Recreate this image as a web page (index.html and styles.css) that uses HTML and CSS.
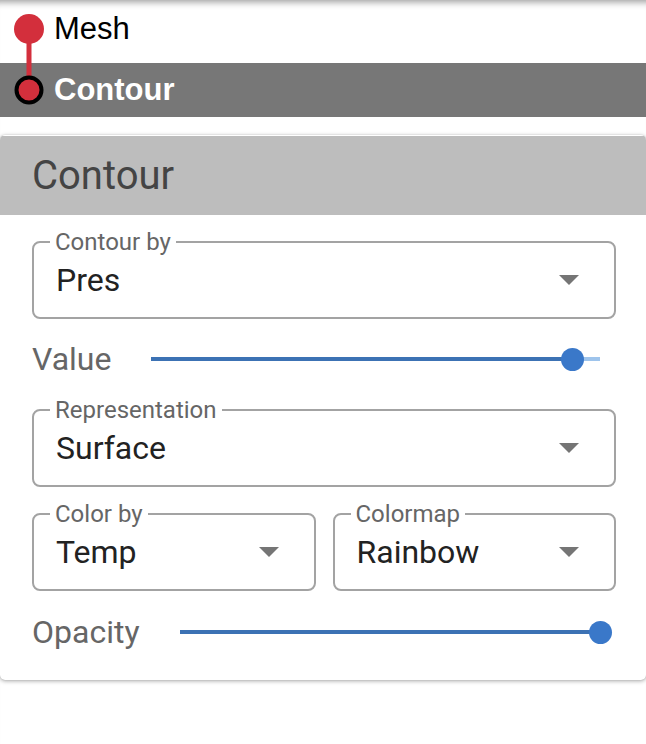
FILE: index.html
```html
<!DOCTYPE html>
<html>
<head>
<meta charset="utf-8">
<link rel="stylesheet" href="styles.css">
</head>
<body>
<div class="app">
  <div class="tree">
    <svg class="graph" width="58" height="120" viewBox="0 0 58 120">
      <line x1="29" y1="40" x2="29" y2="80" stroke="#d32f3c" stroke-width="5"/>
      <circle cx="29" cy="29" r="15" fill="#d32f3c"/>
      <circle cx="29" cy="90" r="12.5" fill="#d32f3c" stroke="#000" stroke-width="4"/>
    </svg>
    <div class="node">Mesh</div>
    <div class="node selected">Contour</div>
  </div>

  <div class="panel">
    <div class="panel-header">Contour</div>
    <div class="panel-body">
      <fieldset class="field">
        <legend>Contour by</legend>
        <div class="select-row">
          <span class="select-value">Pres</span>
          <svg class="arrow" width="20" height="10" viewBox="0 0 20 10"><path d="M0 0 L20 0 L10 10 Z" fill="#757575"/></svg>
        </div>
      </fieldset>

      <div class="slider-row slider-value">
        <span class="slider-label">Value</span>
        <div class="track">
          <div class="track-rest"></div>
          <div class="track-fill" style="width:93.8%"></div>
          <div class="thumb" style="left:93.8%"></div>
        </div>
      </div>

      <fieldset class="field field-2">
        <legend>Representation</legend>
        <div class="select-row">
          <span class="select-value">Surface</span>
          <svg class="arrow" width="20" height="10" viewBox="0 0 20 10"><path d="M0 0 L20 0 L10 10 Z" fill="#757575"/></svg>
        </div>
      </fieldset>

      <div class="pair">
        <fieldset class="field">
          <legend>Color by</legend>
          <div class="select-row">
            <span class="select-value">Temp</span>
            <svg class="arrow" width="20" height="10" viewBox="0 0 20 10"><path d="M0 0 L20 0 L10 10 Z" fill="#757575"/></svg>
          </div>
        </fieldset>
        <fieldset class="field">
          <legend>Colormap</legend>
          <div class="select-row">
            <span class="select-value">Rainbow</span>
            <svg class="arrow" width="20" height="10" viewBox="0 0 20 10"><path d="M0 0 L20 0 L10 10 Z" fill="#757575"/></svg>
          </div>
        </fieldset>
      </div>

      <div class="slider-row slider-opacity">
        <span class="slider-label">Opacity</span>
        <div class="track">
          <div class="track-fill" style="width:100%"></div>
          <div class="thumb" style="left:100%"></div>
        </div>
      </div>
    </div>
  </div>
</div>
</body>
</html>
```

FILE: styles.css
```css
html, body {
  margin: 0;
  padding: 0;
  background: #fff;
}

.app {
  width: 646px;
  min-height: 744px;
  box-shadow: inset 0 9px 7px -7px rgba(0, 0, 0, 0.4);
  font-family: Roboto, "Liberation Sans", sans-serif;
}

.tree {
  position: relative;
  padding-top: 2px;
  display: flex;
  flex-direction: column;
  gap: 7px;
}

.graph {
  position: absolute;
  left: 0;
  top: 0;
}

.node {
  height: 54px;
  display: flex;
  align-items: center;
  padding-left: 54px;
  font-family: "Liberation Sans", Arial, sans-serif;
  font-size: 31px;
  color: #000;
}

.node.selected {
  background: #777777;
  color: #fff;
  font-weight: bold;
}

.panel {
  margin-top: 18px;
  border-radius: 5px;
  box-shadow: 0 1px 4px rgba(0, 0, 0, 0.35), 0 0 1px rgba(0, 0, 0, 0.2);
  overflow: hidden;
  background: #fff;
}

.panel-header {
  height: 79px;
  margin-top: 1px;
  background: #bdbdbd;
  display: flex;
  align-items: center;
  padding-left: 32px;
  font-size: 40px;
  color: #444;
}

.panel-body {
  padding: 15px 30px 24px 32px;
  display: flex;
  flex-direction: column;
}

.field {
  margin: 0;
  min-width: 0;
  border: 2px solid #a3a3a3;
  border-radius: 8px;
  padding: 0 22px 11px 22px;
}

.field legend {
  margin-left: -6px;
  padding: 0 5px;
  font-size: 24px;
  line-height: 24px;
  color: #666;
}

.select-row {
  height: 52px;
  display: flex;
  align-items: center;
  justify-content: space-between;
}

.select-value {
  font-size: 32px;
  color: #222;
}

.arrow {
  margin-right: 13px;
  flex: none;
}

.slider-row {
  height: 48px;
  display: flex;
  align-items: center;
}

.slider-value {
  margin-top: 16px;
  margin-bottom: 15px;
}

.slider-opacity {
  margin-top: 17px;
}

.slider-label {
  font-size: 32px;
  color: #666;
}

.track {
  position: relative;
  flex: 1;
  height: 4px;
  margin-left: 40px;
  margin-right: 16px;
}

.track-rest {
  position: absolute;
  inset: 0;
  background: #9ec4ec;
}

.track-fill {
  position: absolute;
  left: 0;
  top: 0;
  bottom: 0;
  background: #3c72b4;
}

.thumb {
  position: absolute;
  top: 50%;
  width: 23px;
  height: 23px;
  margin-left: -11.5px;
  margin-top: -11.5px;
  border-radius: 50%;
  background: #3a78c9;
}

.pair {
  margin-top: 15px;
  display: grid;
  grid-template-columns: 1fr 1fr;
  gap: 17px;
}
```
